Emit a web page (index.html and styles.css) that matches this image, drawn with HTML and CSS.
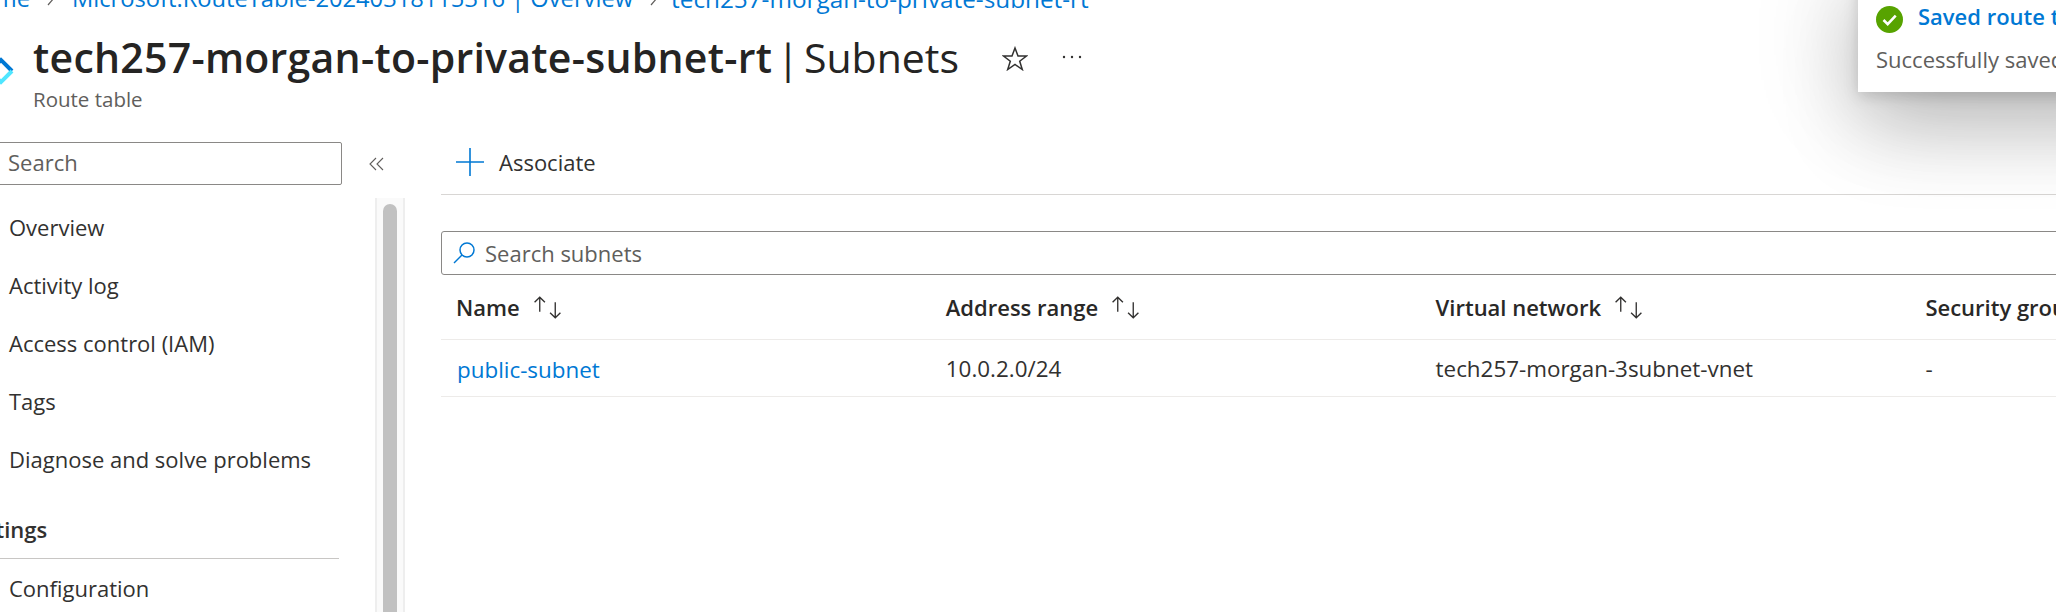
FILE: index.html
```html
<!DOCTYPE html>
<html lang="en">
<head>
    <meta charset="UTF-8">
    <title>tech257-morgan-to-private-subnet-rt | Subnets</title>
    <link rel="stylesheet" href="styles.css">
</head>
<body>

    <nav class="breadcrumb">
        <a href="#">Home</a>
        <svg class="crumb-sep" viewBox="0 0 10 16"><path d="M2 1l6 7-6 7"/></svg>
        <a href="#">Microsoft.RouteTable-20240318115316 | Overview</a>
        <svg class="crumb-sep" viewBox="0 0 10 16"><path d="M2 1l6 7-6 7"/></svg>
        <a class="crumb-last" href="#">tech257-morgan-to-private-subnet-rt</a>
    </nav>

    <header class="title-row">
        <svg class="res-icon" viewBox="0 0 30 30">
            <path class="res-top" d="M4 15L15 4l11 11"/>
            <path class="res-bottom" d="M26 15L15 26 4 15"/>
        </svg>
        <div class="title-text">
            <h1><b>tech257-morgan-to-private-subnet-rt</b> | Subnets</h1>
            <div class="subtitle">Route table</div>
        </div>
        <svg class="star" viewBox="0 0 26 25"><path d="M13 2l3 8h8.500l-6.800 5.200 2.600 8.300L13 18.500l-7.300 5 2.600-8.300L1.500 10H10z"/></svg>
        <svg class="more" viewBox="0 0 20 4"><circle cx="2" cy="2" r="1.200"/><circle cx="10" cy="2" r="1.200"/><circle cx="18" cy="2" r="1.200"/></svg>
    </header>

    <div class="content">
        <aside class="sidebar">
            <div class="side-search">Search</div>
            <ul class="side-nav">
                <li>Overview</li>
                <li>Activity log</li>
                <li>Access control (IAM)</li>
                <li>Tags</li>
                <li>Diagnose and solve problems</li>
            </ul>
            <div class="side-heading">Settings</div>
            <ul class="side-nav">
                <li>Configuration</li>
            </ul>
        </aside>

        <div class="collapse-col">
            <svg class="collapse" viewBox="0 0 15 14"><path d="M7 1L1 7l6 6M14 1L8 7l6 6"/></svg>
            <div class="scroll-track"><div class="scroll-thumb"></div></div>
        </div>

        <main class="main">
            <div class="toolbar">
                <svg class="plus" viewBox="0 0 28 28"><path d="M14 0v28M0 14h28"/></svg>
                <span>Associate</span>
            </div>

            <div class="filter">
                <svg class="search-icon" viewBox="0 0 23 22"><circle cx="14" cy="8" r="7"/><path d="M9 13l-8 8"/></svg>
                <span>Search subnets</span>
            </div>

            <div class="grid-row grid-head">
                <div class="cell">Name <svg class="sort" viewBox="0 0 30 22"><path d="M7.500 15V1M2.500 6l5-5 5 5M22.500 6v15M17.500 16l5 5 5-5"/></svg></div>
                <div class="cell">Address range <svg class="sort" viewBox="0 0 30 22"><path d="M7.500 15V1M2.500 6l5-5 5 5M22.500 6v15M17.500 16l5 5 5-5"/></svg></div>
                <div class="cell">Virtual network <svg class="sort" viewBox="0 0 30 22"><path d="M7.500 15V1M2.500 6l5-5 5 5M22.500 6v15M17.500 16l5 5 5-5"/></svg></div>
                <div class="cell">Security group</div>
            </div>
            <div class="grid-row">
                <div class="cell"><a class="link" href="#">public-subnet</a></div>
                <div class="cell">10.0.2.0/24</div>
                <div class="cell">tech257-morgan-3subnet-vnet</div>
                <div class="cell">-</div>
            </div>
        </main>
    </div>

    <!-- notification over the top right corner -->
    <div class="toast">
        <div class="toast-title">
            <svg class="toast-check" viewBox="0 0 27 27"><circle cx="13.500" cy="13.500" r="13.500"/><path d="M7.500 14l4.200 4.200 8-8.500"/></svg>
            <span class="toast-name">Saved route table</span>
        </div>
        <div class="toast-msg">Successfully saved route table</div>
    </div>

</body>
</html>
```

FILE: styles.css
```css
html, body {
    height: 612px;
}

body {
    margin: 0;
    overflow: hidden;
    position: relative;
    background-color: white;
    color: #323130;
    font-family: 'Open Sans', 'Noto Sans', sans-serif;
    font-size: 22px;
}

a {
    color: #0078d4;
    text-decoration: none;
}

ul {
    list-style: none;
    margin: 0;
    padding: 0;
}

/* breadcrumb is cut by the top and left edge of the shot */
.breadcrumb {
    display: flex;
    align-items: center;
    gap: 16px;
    height: 28px;
    margin: -16px 0 0 -37px;
    font-size: 23.700px;
    white-space: nowrap;
}

.crumb-last {
    margin-left: -4px;
    font-size: 24.300px;
}

.crumb-sep {
    width: 10px;
    height: 16px;
    fill: none;
    stroke: #605e5c;
    stroke-width: 1.2;
}

.title-row {
    display: flex;
    align-items: flex-start;
    height: 130px;
}

.res-icon {
    width: 30px;
    height: 30px;
    margin: 44px 17px 0 -14px;
    flex: none;
    fill: none;
    stroke-width: 4;
}

.res-top {
    stroke: #0078d4;
}

.res-bottom {
    stroke: #50e6ff;
}

.title-text {
    margin-top: 18px;
}

h1 {
    margin: 0;
    font-size: 41px;
    line-height: 54px;
    font-weight: 400;
    word-spacing: -6px;
    color: #252423;
    white-space: nowrap;
}

h1 b {
    font-weight: 600;
    letter-spacing: 0.27px;
}

.subtitle {
    margin-top: 3px;
    font-size: 20.500px;
    line-height: 24px;
    color: #605e5c;
}

.star {
    width: 26px;
    height: 25px;
    margin: 34px 0 0 43px;
    fill: none;
    stroke: #323130;
    stroke-width: 1.5;
}

.more {
    width: 20px;
    height: 4px;
    margin: 43px 0 0 34px;
    fill: #323130;
}

.content {
    display: flex;
    align-items: flex-start;
}

.sidebar {
    width: 342px;
    flex: none;
}

.side-search {
    box-sizing: border-box;
    height: 43px;
    margin-left: -10px;
    padding-left: 17px;
    line-height: 39px;
    color: #605e5c;
    border: 1px solid #8a8886;
    border-radius: 2px;
}

.side-nav {
    padding-left: 9px;
}

.side-search + .side-nav {
    margin-top: 13px;
}

.side-nav li {
    height: 58px;
    line-height: 58px;
    white-space: nowrap;
}

.side-heading {
    box-sizing: border-box;
    height: 71px;
    margin: 0 3px 0 -38px;
    padding-top: 26px;
    font-weight: 600;
    border-bottom: 1px solid #c8c6c4;
}

.collapse-col {
    width: 63px;
    flex: none;
    display: flex;
    flex-direction: column;
    align-items: flex-start;
}

.collapse {
    width: 15px;
    height: 14px;
    margin: 15px 0 0 27px;
    fill: none;
    stroke: #605e5c;
    stroke-width: 1.1;
}

.scroll-track {
    box-sizing: border-box;
    width: 30px;
    height: 420px;
    margin: 27px 0 0 33px;
    padding: 6px 6px 0;
    background-color: #fafafa;
    border: solid #eeeeee;
    border-width: 0 2px;
}

.scroll-thumb {
    height: 100%;
    background-color: #c1c1c1;
    border-radius: 8px 8px 0 0;
}

.main {
    flex: 1;
    min-width: 0;
    margin-left: 36px;
    overflow: hidden;
}

.toolbar {
    box-sizing: border-box;
    display: flex;
    align-items: center;
    height: 53px;
    padding: 0 0 12px 15px;
    gap: 15px;
    border-bottom: 1px solid #d8d6d4;
}

.plus {
    width: 28px;
    height: 28px;
    fill: none;
    stroke: #0078d4;
    stroke-width: 1.6;
}

/* runs on past the right edge of the shot */
.filter {
    box-sizing: border-box;
    display: flex;
    align-items: center;
    gap: 9px;
    height: 44px;
    margin: 36px -20px 0 0;
    padding-left: 10px;
    color: #605e5c;
    border: 1px solid #8a8886;
    border-radius: 3px;
}

.search-icon {
    width: 23px;
    height: 22px;
    margin-left: 1px;
    fill: none;
    stroke: #0078d4;
    stroke-width: 1.5;
}

.grid-row {
    display: grid;
    grid-template-columns: repeat(4, 489.800px);
    height: 56px;
    font-size: 22.400px;
    border-bottom: 1px solid #edebe9;
    align-items: center;
    white-space: nowrap;
}

.grid-head {
    height: 64px;
    font-size: 22px;
    font-weight: 600;
    color: #292827;
}

.cell {
    display: flex;
    align-items: center;
    gap: 12px;
    padding-left: 15px;
}

.link {
    margin-left: 1px;
    padding-top: 2px;
}

.sort {
    width: 31px;
    height: 23px;
    fill: none;
    stroke: #323130;
    stroke-width: 1.3;
}

.toast {
    position: absolute;
    top: -20px;
    left: 1858px;
    box-sizing: border-box;
    width: 440px;
    height: 112px;
    padding: 20px 0 0 18px;
    background-color: white;
    white-space: nowrap;
    box-shadow: 0 40px 80px rgba(0, 0, 0, 0.18), 0 0 110px rgba(0, 0, 0, 0.2), 0 4px 14px rgba(0, 0, 0, 0.15);
}

.toast-title {
    display: flex;
    align-items: center;
    gap: 15px;
    color: #0078d4;
    font-weight: 600;
}

.toast-name {
    margin-bottom: 2px;
}

.toast-check {
    width: 27px;
    height: 27px;
    margin-top: 6px;
}

.toast-check circle {
    fill: #57a300;
}

.toast-check path {
    fill: none;
    stroke: white;
    stroke-width: 2.6;
}

.toast-msg {
    margin-top: 11px;
    color: #605e5c;
}
```
